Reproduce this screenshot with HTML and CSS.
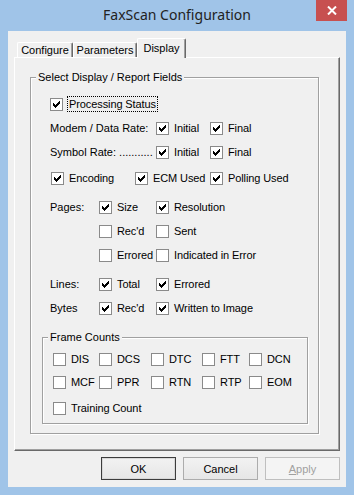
FILE: index.html
```html
<!DOCTYPE html>
<html lang="en">
<head>
  <meta charset="UTF-8" />
  <title>FaxScan Configuration</title>
  <link rel="stylesheet" href="styles.css">
</head>
<body>
  <div class="window">
    <div class="titlebar">
      <h1 class="title">FaxScan Configuration</h1>
      <button class="close" aria-label="Close">
        <svg width="10" height="9" viewBox="0 0 10 9"><path d="M1 0.5 L9 8.5 M9 0.5 L1 8.5" stroke="#fff" stroke-width="2" fill="none"/></svg>
      </button>
    </div>

    <div class="client">
      <div class="tabs">
        <div class="tab tab-configure">Configure</div>
        <div class="tab tab-parameters">Parameters</div>
        <div class="tab tab-display active">Display</div>
      </div>

      <div class="panel">
        <fieldset class="group outer">
          <legend>Select Display / Report Fields</legend>
          <div class="fields">
            <div class="row">
              <label class="check"><span class="box on"></span><span class="focus">Processing Status</span></label>
            </div>

            <div class="row row-rate">
              <span>Modem / Data Rate:</span>
              <label class="check"><span class="box on"></span>Initial</label>
              <label class="check"><span class="box on"></span>Final</label>
            </div>
            <div class="row row-rate">
              <span>Symbol Rate: ...........</span>
              <label class="check"><span class="box on"></span>Initial</label>
              <label class="check"><span class="box on"></span>Final</label>
            </div>

            <div class="row row-flags space-sm">
              <label class="check"><span class="box on"></span>Encoding</label>
              <label class="check"><span class="box on"></span>ECM Used</label>
              <label class="check"><span class="box on"></span>Polling Used</label>
            </div>

            <div class="row row-pages space">
              <span>Pages:</span>
              <label class="check"><span class="box on"></span>Size</label>
              <label class="check"><span class="box on"></span>Resolution</label>
            </div>
            <div class="row row-pages">
              <span></span>
              <label class="check"><span class="box"></span>Rec'd</label>
              <label class="check"><span class="box"></span>Sent</label>
            </div>
            <div class="row row-pages">
              <span></span>
              <label class="check"><span class="box"></span>Errored</label>
              <label class="check"><span class="box"></span>Indicated in Error</label>
            </div>

            <div class="row row-pages space">
              <span>Lines:</span>
              <label class="check"><span class="box on"></span>Total</label>
              <label class="check"><span class="box on"></span>Errored</label>
            </div>
            <div class="row row-pages">
              <span>Bytes</span>
              <label class="check"><span class="box on"></span>Rec'd</label>
              <label class="check"><span class="box on"></span>Written to Image</label>
            </div>
          </div>

          <fieldset class="group frames">
            <legend>Frame Counts</legend>
            <div class="frame-rows">
              <div class="row row-frames">
                <label class="check"><span class="box"></span>DIS</label>
                <label class="check"><span class="box"></span>DCS</label>
                <label class="check"><span class="box"></span>DTC</label>
                <label class="check"><span class="box"></span>FTT</label>
                <label class="check"><span class="box"></span>DCN</label>
              </div>
              <div class="row row-frames">
                <label class="check"><span class="box"></span>MCF</label>
                <label class="check"><span class="box"></span>PPR</label>
                <label class="check"><span class="box"></span>RTN</label>
                <label class="check"><span class="box"></span>RTP</label>
                <label class="check"><span class="box"></span>EOM</label>
              </div>
              <div class="row training">
                <label class="check"><span class="box"></span>Training Count</label>
              </div>
            </div>
          </fieldset>
        </fieldset>
      </div>

      <div class="buttons">
        <button class="btn default">OK</button>
        <button class="btn">Cancel</button>
        <button class="btn" disabled><u>A</u>pply</button>
      </div>
    </div>
  </div>

  <script>
    // tick mark for every checked box
    const tick = '<svg width="11" height="11" viewBox="0 0 11 11" shape-rendering="crispEdges">' +
      '<path d="M2 4h1v3H2z M3 5h1v3H3z M4 6h1v3H4z M5 5h1v3H5z M6 4h1v3H6z M7 3h1v3H7z M8 2h1v3H8z" fill="#000"/></svg>';
    document.querySelectorAll('.box.on').forEach(function (b) {
      b.innerHTML = tick;
    });
  </script>
</body>
</html>
```

FILE: styles.css
```css
* {
  box-sizing: border-box;
}

body {
  margin: 0;
  font-family: "Liberation Sans", Arial, sans-serif;
  font-size: 11px;
  color: #000;
  background: #a0c4e8;
}

.window {
  width: 354px;
  height: 495px;
  background: #a0c4e8;
}

.titlebar {
  height: 31px;
  display: grid;
  grid-template-columns: 38px 1fr 38px;
  align-items: start;
}

.title {
  grid-column: 2;
  margin: 0;
  font-family: "Noto Sans", sans-serif;
  font-weight: normal;
  font-size: 14px;
  line-height: 30px;
  text-align: center;
  color: #222;
}

.close {
  width: 31px;
  height: 21px;
  padding: 0;
  border: 0;
  background: #c75050;
  display: flex;
  align-items: center;
  justify-content: center;
}

.client {
  margin: 0 8px;
  height: 456px;
  background: #f0f0f0;
  padding: 7px 6px 0;
}

/* tabs */
.tabs {
  display: flex;
  align-items: flex-end;
  height: 19px;
  padding-left: 3px;
}

.tab {
  height: 15px;
  line-height: 14px;
  text-align: center;
  border: 1px solid #fff;
  border-right-color: #696969;
  border-bottom: 0;
  border-radius: 2px 2px 0 0;
  box-shadow: inset -1px 0 0 #a0a0a0;
  background: #f0f0f0;
}

.tab-configure { width: 56px; }
.tab-parameters { width: 64px; }
.tab-display { width: 49px; }

.tab.active {
  height: 20px;
  line-height: 18px;
  margin-bottom: -1px;
  position: relative;
  z-index: 1;
}

.panel {
  height: 394px;
  border: 1px solid #fff;
  border-right-color: #696969;
  border-bottom-color: #696969;
  box-shadow: inset -1px -1px 0 #a0a0a0;
  padding: 13px 0 0 15px;
}

/* group boxes */
.group {
  margin: 0;
  border: 1px solid #a0a0a0;
  box-shadow: 1px 1px 0 #fff, inset 1px 1px 0 #fff;
  padding: 0 0 0 5px;
}

.group legend {
  padding: 0 2px;
  line-height: 12px;
  background: #f0f0f0;
}

.outer {
  width: 289px;
  padding-bottom: 9px;
}

.fields {
  padding: 13px 0 0 14px;
  display: flex;
  flex-direction: column;
  gap: 8px;
}

.row {
  height: 16px;
  display: grid;
  align-items: center;
}

.space { margin-top: 5px; }
.space-sm { margin-top: 2px; }

.row-rate { grid-template-columns: 106px 54px 1fr; }
.row-flags { grid-template-columns: 84px 75px 1fr; padding-left: 1px; }
.row-pages { grid-template-columns: 49px 57px 1fr; }
.row-frames { grid-template-columns: 46px 52px 51px 47px 1fr; }

.check {
  display: flex;
  align-items: center;
  gap: 5px;
  white-space: nowrap;
  letter-spacing: -0.1px;
}

.box {
  flex: none;
  width: 13px;
  height: 13px;
  border: 1px solid #8a8a8a;
  background: #fff;
}

.box svg {
  display: block;
}

.focus {
  padding: 0 1px;
  line-height: 14px;
  outline: 1px dotted #000;
}

.frames {
  width: 266px;
  margin: 15px 0 0 6px;
  padding-bottom: 7px;
}

.frame-rows {
  padding: 8px 0 0 5px;
  display: flex;
  flex-direction: column;
  gap: 7px;
}

.training { margin-top: 3px; }

/* dialog buttons */
.buttons {
  display: flex;
  justify-content: flex-end;
  gap: 7px;
  margin-top: 6px;
}

.btn {
  width: 75px;
  height: 23px;
  padding: 0;
  font: inherit;
  color: #000;
  border: 1px solid #acacac;
  background: linear-gradient(#f2f2f2, #e6e6e6);
}

.btn.default {
  border-color: #3c3c3c;
  box-shadow: inset 0 0 0 1px #d8d8d8;
}

.btn:disabled {
  color: #a0a0a0;
  border-color: #bfbfbf;
  background: #f4f4f4;
}
```
